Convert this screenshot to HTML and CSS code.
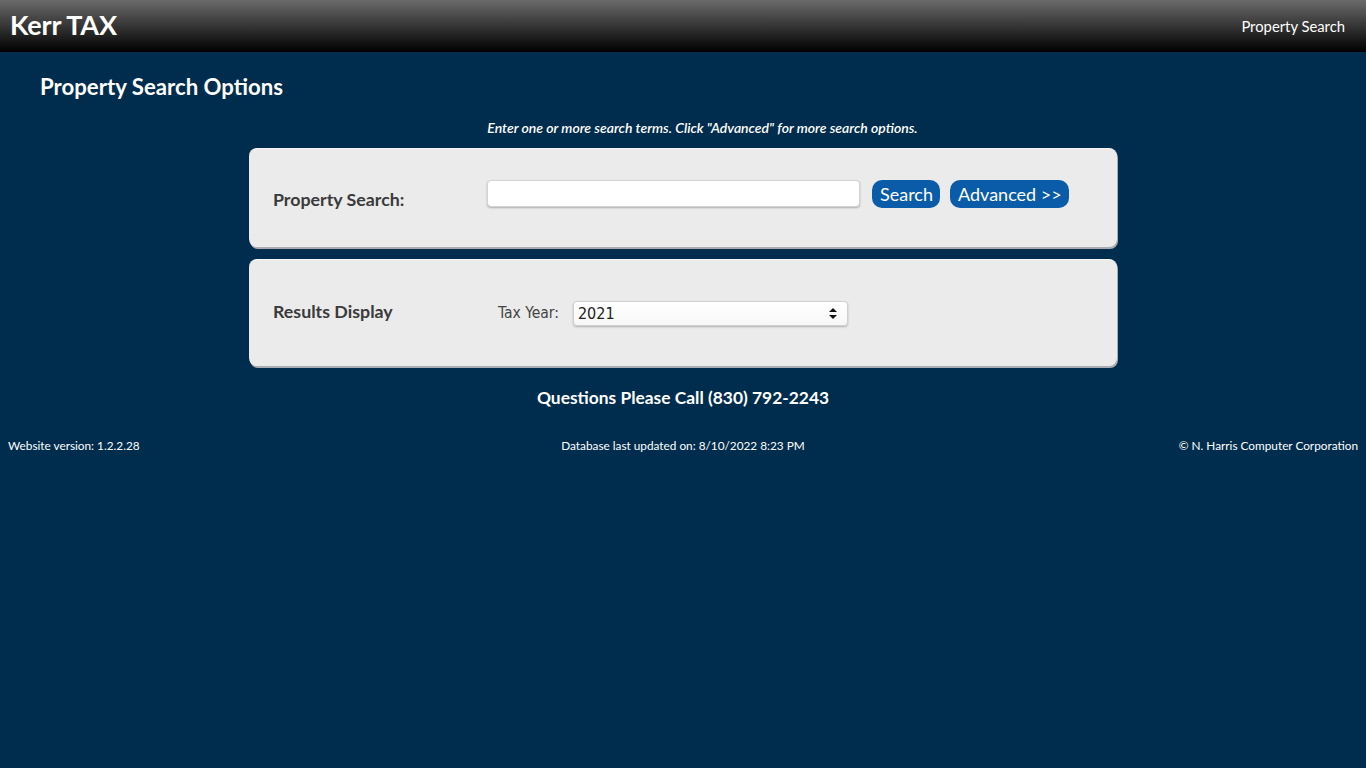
FILE: index.html
```html
<!DOCTYPE html>
<html lang="en">
<head>
<meta charset="utf-8">
<title>Kerr TAX - Property Search</title>
<link rel="stylesheet" href="styles.css">
</head>
<body>
<header class="topbar">
  <div class="brand">Kerr TAX</div>
  <nav class="topnav"><a href="#">Property Search</a></nav>
</header>
<main class="main">
  <h1 class="page-title">Property Search Options</h1>
  <p class="hint">Enter one or more search terms. Click "Advanced" for more search options.</p>
  <section class="panel panel-search">
    <div class="panel-label">Property Search:</div>
    <div class="search-controls">
      <input class="search-input" type="text">
      <button class="btn">Search</button>
      <button class="btn">Advanced &gt;&gt;</button>
    </div>
  </section>
  <section class="panel panel-results">
    <div class="panel-label">Results Display</div>
    <div class="year-controls">
      <span class="year-label">Tax Year:</span>
      <div class="select">
        <span class="select-value">2021</span>
        <svg class="select-arrows" width="8" height="11" viewBox="0 0 8 11"><path d="M4 0 L8 4 L0 4 Z M0 7 L8 7 L4 11 Z" fill="#111"/></svg>
      </div>
    </div>
  </section>
  <p class="questions">Questions Please Call (830) 792-2243</p>
</main>
<footer class="footer">
  <span class="foot-left">Website version: 1.2.2.28</span>
  <span class="foot-center">Database last updated on: 8/10/2022 8:23 PM</span>
  <span class="foot-right">© N. Harris Computer Corporation</span>
</footer>
</body>
</html>
```
FILE: styles.css
```css
html, body {
  margin: 0;
  padding: 0;
  background: #002d4d;
  font-family: Lato, "Open Sans", sans-serif;
  color: #fff;
  height: 100%;
}
.topbar {
  height: 52px;
  background: linear-gradient(#6a6a6a, #000);
  display: flex;
  align-items: center;
  justify-content: space-between;
  padding: 0 21px 0 10px;
}
.brand {
  font-size: 27px;
  font-weight: 700;
  letter-spacing: -0.2px;
  margin-top: -4px;
}
.topnav a {
  color: #fff;
  text-decoration: none;
  font-size: 14.8px;
  margin-top: -1px;
  display: block;
}
.main {
  display: flex;
  flex-direction: column;
  align-items: center;
}
.page-title {
  align-self: flex-start;
  margin: 21px 0 0 40px;
  font-size: 22.2px;
  font-weight: 700;
  line-height: 28px;
}
.hint {
  margin: 19px 0 0 39px;
  font-size: 14px;
  font-style: italic;
  font-weight: 600;
  line-height: 16px;
}
.panel {
  box-sizing: border-box;
  width: 868px;
  background: #ebebeb;
  border-radius: 8px;
  border-top: 1px solid #f6f6f6;
  box-shadow: 1px 2px 0 #a9adb2;
  display: flex;
  align-items: center;
  padding-left: 24px;
  color: #333;
}
.panel-search {
  margin-top: 12px;
  height: 99px;
}
.panel-results {
  margin-top: 12px;
  height: 107px;
}
.panel-label {
  width: 214px;
  font-size: 17.8px;
  font-weight: 700;
  color: #3a3a3a;
}
.panel-search .panel-label { margin-top: 2px; }
.panel-results .panel-label { margin-top: -4px; }
.search-controls {
  display: flex;
  align-items: center;
  margin-top: -9px;
}
.search-input {
  box-sizing: border-box;
  width: 373px;
  height: 27px;
  border: 1px solid #d4d4d4;
  border-radius: 4px;
  background: #fff;
  box-shadow: 0 1px 2px rgba(0,0,0,0.25);
  margin: 0 12px 0 0;
  padding: 0;
}
.btn {
  height: 28px;
  background: #0b5ca8;
  color: #fff;
  border: none;
  border-radius: 10px;
  font-family: Lato, "Open Sans", sans-serif;
  font-size: 18px;
  padding: 0 7px 0 8px;
  margin-right: 10px;
  line-height: 28px;
}
.year-controls {
  display: flex;
  align-items: center;
  margin-left: 11px;
  margin-top: 0;
}
.year-label {
  font-family: "Liberation Sans Narrow", "DejaVu Sans Condensed", "Liberation Sans", sans-serif;
  font-size: 15.5px;
  color: #444;
  margin-right: 14px;
}
.select {
  box-sizing: border-box;
  width: 275px;
  height: 25px;
  background: linear-gradient(#fff, #f7f7f7);
  border: 1px solid #d0d0d0;
  border-radius: 4px;
  box-shadow: 0 1px 2px rgba(0,0,0,0.25);
  display: flex;
  align-items: center;
  justify-content: space-between;
  padding: 0 10px 0 4px;
}
.select-value {
  font-family: "Liberation Sans Narrow", "DejaVu Sans Condensed", "Liberation Sans", sans-serif;
  font-size: 16px;
  color: #222;
}
.questions {
  margin: 21px 0 0 0;
  font-size: 17.4px;
  font-weight: 700;
  line-height: 22px;
}
.footer {
  display: grid;
  grid-template-columns: 1fr auto 1fr;
  padding: 0 8px;
  margin-top: 29px;
  font-size: 11.8px;
  line-height: 16px;
}
.foot-center { text-align: center; }
.foot-right { text-align: right; }
```
